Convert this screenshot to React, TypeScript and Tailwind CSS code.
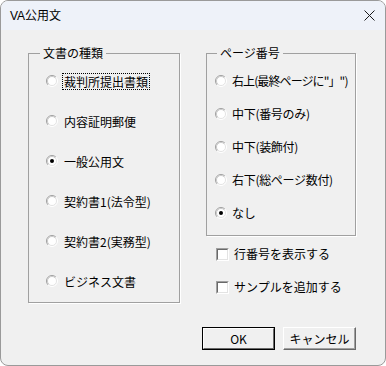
import React from 'react';

const docTypes = ['裁判所提出書類', '内容証明郵便', '一般公用文', '契約書1(法令型)', '契約書2(実務型)', 'ビジネス文書'];
const pageNums = ['右上(最終ページに"」")', '中下(番号のみ)', '中下(装飾付)', '右下(総ページ数付)', 'なし'];

// classic 3D radio circle
function Radio({ checked }: { checked?: boolean }) {
  return (
    <svg width="12" height="12" viewBox="0 0 12 12" className="shrink-0">
      <circle cx="6" cy="6" r="5" fill="#fff" />
      <path d="M9.9 2.1 A5.5 5.5 0 0 0 2.1 9.9" fill="none" stroke="#a0a0a0" strokeWidth="1" />
      <path d="M2.1 9.9 A5.5 5.5 0 0 0 9.9 2.1" fill="none" stroke="#ffffff" strokeWidth="1" />
      <path d="M9.2 2.8 A4.5 4.5 0 0 0 2.8 9.2" fill="none" stroke="#c8c8c8" strokeWidth="1" />
      <path d="M2.8 9.2 A4.5 4.5 0 0 0 9.2 2.8" fill="none" stroke="#e3e3e3" strokeWidth="1" />
      {checked && <circle cx="6" cy="6" r="2" fill="#000" />}
    </svg>
  );
}

function CheckBox() {
  return (
    <span className="w-[13px] h-[13px] shrink-0 border-t border-l border-[#a0a0a0] border-b-white border-r-white border-b border-r">
      <span className="block w-full h-full bg-white border-t border-l border-[#696969] border-b border-r border-b-[#e3e3e3] border-r-[#e3e3e3]" />
    </span>
  );
}

export default function App() {
  return (
    <div className="w-[386px] h-[366px] border border-[#9a9a9a] rounded-[8px] overflow-hidden bg-[#f0f0f0] text-black font-['Noto_Sans_CJK_JP',sans-serif] text-[12px]">
      {/* Title bar */}
      <div className="h-[29px] bg-[#eef2f9] flex items-center justify-between pl-[9px] pr-[10px]">
        <span className="font-['Liberation_Sans','Noto_Sans_CJK_JP',sans-serif] text-[12px]">VA公用文</span>
        <svg width="11" height="11" viewBox="0 0 11 11">
          <path d="M0.5 0.5 L10.5 10.5 M10.5 0.5 L0.5 10.5" stroke="#1a1a1a" strokeWidth="1" />
        </svg>
      </div>

      {/* Body */}
      <div className="pt-[15px] pl-[27px] flex flex-col">
        <div className="flex gap-[26px]">
          <fieldset className="w-[152px] h-[258px] border border-[#a0a0a0] shadow-[1px_1px_0_#fff]">
            <legend className="ml-[11px] px-[3px] leading-[16px]">文書の種類</legend>
            <div className="flex flex-col gap-[20px] pt-[10px] pl-[17px]">
              {docTypes.map((t, i) => (
                <div key={t} className="h-[20px] flex items-center gap-[4px] whitespace-nowrap">
                  <Radio checked={i === 2} />
                  <span className={i === 0 ? 'border border-dotted border-black px-[1px] leading-[15px]' : 'px-[2px] leading-[15px]'}>{t}</span>
                </div>
              ))}
            </div>
          </fieldset>

          <div className="flex flex-col">
            <fieldset className="w-[150px] h-[191px] border border-[#a0a0a0] shadow-[1px_1px_0_#fff]">
              <legend className="ml-[10px] px-[3px] leading-[16px]">ページ番号</legend>
              <div className="flex flex-col gap-[13px] pt-[10px] pl-[8px]">
                {pageNums.map((t, i) => (
                  <div key={t} className="h-[20px] flex items-center gap-[5px] whitespace-nowrap">
                    <Radio checked={i === 4} />
                    <span className={i === 0 ? 'tracking-[-0.9px]' : 'tracking-[-0.3px]'}>{t}</span>
                  </div>
                ))}
              </div>
            </fieldset>
            <div className="flex flex-col gap-[13px] mt-[8px] pl-[10px]">
              <div className="h-[20px] flex items-center gap-[5px] whitespace-nowrap">
                <CheckBox />
                <span>行番号を表示する</span>
              </div>
              <div className="h-[20px] flex items-center gap-[5px] whitespace-nowrap">
                <CheckBox />
                <span>サンプルを追加する</span>
              </div>
            </div>
          </div>
        </div>

        {/* Buttons */}
        <div className="flex justify-end gap-[8px] mt-[24px] pr-[29px]">
          <button className="w-[73px] h-[23px] border border-black">
            <span className="flex items-center justify-center w-full h-full border-t border-l border-white border-b border-r border-b-[#696969] border-r-[#696969] bg-[#f0f0f0]">OK</span>
          </button>
          <button className="w-[73px] h-[23px] border-t border-l border-white border-b border-r border-b-[#696969] border-r-[#696969] shadow-[inset_-1px_-1px_0_#a0a0a0] flex items-center justify-center">
            キャンセル
          </button>
        </div>
      </div>
    </div>
  );
}
